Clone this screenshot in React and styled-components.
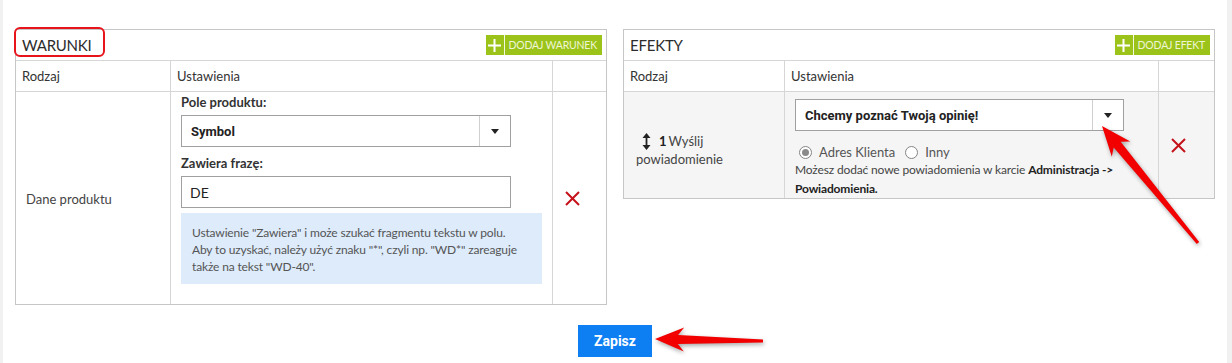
import React from 'react';
import styled, { createGlobalStyle } from 'styled-components';

const GlobalStyle = createGlobalStyle`
  html, body {
    margin: 0;
    padding: 0;
    background: #fff;
  }
  * {
    box-sizing: border-box;
  }
`;

const arrowPoints = (tip, tail, headLen, headHalf, neckHalf, tailHalf) => {
  const dx = tail[0] - tip[0];
  const dy = tail[1] - tip[1];
  const len = Math.hypot(dx, dy);
  const ux = dx / len;
  const uy = dy / len;
  const px = -uy;
  const py = ux;
  const base = [tip[0] + ux * headLen, tip[1] + uy * headLen];
  const neck = [tip[0] + ux * (headLen - 6), tip[1] + uy * (headLen - 6)];
  const pts = [
    tip,
    [base[0] + px * headHalf, base[1] + py * headHalf],
    [neck[0] + px * neckHalf, neck[1] + py * neckHalf],
    [tail[0] + px * tailHalf, tail[1] + py * tailHalf],
    [tail[0] - px * tailHalf, tail[1] - py * tailHalf],
    [neck[0] - px * neckHalf, neck[1] - py * neckHalf],
    [base[0] - px * headHalf, base[1] - py * headHalf],
  ];
  return pts.map((p) => p.map((v) => v.toFixed(1)).join(',')).join(' ');
};

const PlusIcon = () => (
  <svg width="13" height="13" viewBox="0 0 13 13">
    <rect x="5.5" y="0" width="2" height="13" fill="#fff" />
    <rect x="0" y="5.5" width="13" height="2" fill="#fff" />
  </svg>
);

const RemoveIcon = () => (
  <svg width="15" height="15" viewBox="0 0 15 15">
    <path d="M1 1 L14 14 M14 1 L1 14" stroke="#c5121b" strokeWidth="2" fill="none" />
  </svg>
);

const SortIcon = () => (
  <svg width="9" height="17" viewBox="0 0 9 17">
    <path d="M4.5 0 L8.5 5 L5.4 5 L5.4 12 L8.5 12 L4.5 17 L0.5 12 L3.6 12 L3.6 5 L0.5 5 Z" fill="#222" />
  </svg>
);

const AddButton = ({ children }) => (
  <Add>
    <AddIcon>
      <PlusIcon />
    </AddIcon>
    <AddLabel>{children}</AddLabel>
  </Add>
);

const SelectBox = ({ value, width }) => (
  <Select $width={width}>
    <SelectValue>{value}</SelectValue>
    <SelectCaret>
      <Caret />
    </SelectCaret>
  </Select>
);

const Radio = ({ checked, label }) => (
  <RadioLabel>
    <RadioCircle>{checked && <RadioDot />}</RadioCircle>
    {label}
  </RadioLabel>
);

const App = () => {
  return (
    <Page>
      <GlobalStyle />
      <Main>
        <Panels>
          <Panel>
            <PanelHeader>
              <PanelTitle>WARUNKI</PanelTitle>
              <AddButton>DODAJ WARUNEK</AddButton>
            </PanelHeader>
            <Row $cols="154px 382px 54px">
              <HeadCell>Rodzaj</HeadCell>
              <HeadCell>Ustawienia</HeadCell>
              <HeadCell />
            </Row>
            <Row $cols="154px 382px 54px">
              <TypeCell>Dane produktu</TypeCell>
              <SettingsCell>
                <FieldLabel>Pole produktu:</FieldLabel>
                <SelectBox value="Symbol" width={330} />
                <FieldLabel $gap>Zawiera frazę:</FieldLabel>
                <TextInput>DE</TextInput>
                <InfoBox>
                  Ustawienie "Zawiera" i może szukać fragmentu tekstu w polu.
                  <br />
                  Aby to uzyskać, należy użyć znaku "*", czyli np. "WD*" zareaguje
                  <br />
                  także na tekst "WD-40".
                </InfoBox>
              </SettingsCell>
              <ActionCell>
                <RemoveIcon />
              </ActionCell>
            </Row>
          </Panel>

          <Panel>
            <PanelHeader>
              <PanelTitle>EFEKTY</PanelTitle>
              <AddButton>DODAJ EFEKT</AddButton>
            </PanelHeader>
            <Row $cols="160px 374px 56px">
              <HeadCell>Rodzaj</HeadCell>
              <HeadCell>Ustawienia</HeadCell>
              <HeadCell />
            </Row>
            <Row $cols="160px 374px 56px" $shaded>
              <EffectCell>
                <EffectName>
                  <SortIcon />
                  <b>1</b>Wyślij
                </EffectName>
                powiadomienie
              </EffectCell>
              <EffectSettings>
                <SelectBox value="Chcemy poznać Twoją opinię!" width={329} />
                <RadioRow>
                  <Radio checked label="Adres Klienta" />
                  <Radio label="Inny" />
                </RadioRow>
                <Note>
                  Możesz dodać nowe powiadomienia w karcie <b>Administracja -&gt;</b>
                  <br />
                  <b>Powiadomienia.</b>
                </Note>
              </EffectSettings>
              <ActionCell>
                <RemoveIcon />
              </ActionCell>
            </Row>
          </Panel>
        </Panels>

        <Footer>
          <SaveButton>Zapisz</SaveButton>
        </Footer>
      </Main>

      <Highlight />
      <Annotations width="1232" height="363" viewBox="0 0 1232 363">
        <polygon points={arrowPoints([1102, 126], [1198, 243], 30, 12, 4.5, 1.5)} fill="#f20000" />
        <polygon points={arrowPoints([655, 339], [763, 341], 29, 12, 4.5, 1.5)} fill="#f20000" />
      </Annotations>
    </Page>
  );
};

const Page = styled.div`
  position: relative;
  width: 1232px;
  height: 363px;
  overflow: hidden;
  background: #fff;
  border-left: 3px solid #f1f1f1;
  border-right: 5px solid #f1f1f1;
  font-family: Lato, 'Open Sans', sans-serif;
  color: #444;
`;

const Main = styled.div`
  width: 1200px;
  margin-left: 12px;
  padding-top: 29px;
`;

const Panels = styled.div`
  display: flex;
  align-items: flex-start;
  gap: 16px;
`;

const Panel = styled.div`
  width: 592px;
  border: 1px solid #c6c6c6;
  background: #fff;
`;

const PanelHeader = styled.div`
  height: 30px;
  display: flex;
  align-items: center;
  justify-content: space-between;
  padding: 0 4px 0 6px;
`;

const PanelTitle = styled.div`
  font-size: 15px;
  color: #2c2c2c;
  letter-spacing: -0.2px;
`;

const Add = styled.div`
  display: flex;
  align-items: stretch;
  height: 20px;
  background: #9cc31a;
`;

const AddIcon = styled.div`
  width: 19px;
  display: flex;
  align-items: center;
  justify-content: center;
  border-right: 1px solid #f3f8e0;
`;

const AddLabel = styled.div`
  display: flex;
  align-items: center;
  padding: 0 5px 0 4px;
  font-size: 10.5px;
  color: #eef6d6;
  letter-spacing: -0.2px;
`;

const Row = styled.div`
  display: grid;
  grid-template-columns: ${(p) => p.$cols};
  border-top: 1px solid #d6d6d6;
  background: ${(p) => (p.$shaded ? '#f5f5f5' : '#fff')};

  & > * + * {
    border-left: 1px solid #d6d6d6;
  }
`;

const HeadCell = styled.div`
  height: 30px;
  display: flex;
  align-items: center;
  padding-left: 6px;
  font-size: 13px;
  color: #333;
`;

const TypeCell = styled.div`
  display: flex;
  align-items: center;
  padding: 2px 0 0 10px;
  font-size: 13px;
  color: #444;
`;

const SettingsCell = styled.div`
  display: flex;
  flex-direction: column;
  padding: 1px 10px 20px 10px;
`;

const FieldLabel = styled.div`
  height: 18px;
  line-height: 18px;
  font-size: 13px;
  font-weight: 700;
  color: #333;
  margin-top: ${(p) => (p.$gap ? '7px' : '0')};
  margin-bottom: 4px;
`;

const Select = styled.div`
  width: ${(p) => p.$width}px;
  height: 32px;
  display: flex;
  border: 1px solid #a0a0a0;
  background: #fff;
`;

const SelectValue = styled.div`
  flex: 1;
  display: flex;
  align-items: center;
  padding-left: 9px;
  font-family: Roboto, 'Liberation Sans', sans-serif;
  font-weight: 700;
  font-size: 13px;
  color: #222;
`;

const SelectCaret = styled.div`
  width: 31px;
  display: flex;
  align-items: center;
  justify-content: center;
  border-left: 1px solid #cfcfcf;
`;

const Caret = styled.span`
  width: 0;
  height: 0;
  border-left: 4px solid transparent;
  border-right: 4px solid transparent;
  border-top: 5px solid #222;
`;

const TextInput = styled.div`
  width: 330px;
  height: 32px;
  display: flex;
  align-items: center;
  padding-left: 8px;
  border: 1px solid #a0a0a0;
  background: #fff;
  font-family: Lato, sans-serif;
  font-size: 14px;
  color: #222;
`;

const InfoBox = styled.div`
  margin-top: 5px;
  height: 71px;
  padding: 11px 0 9px 11px;
  background: #ddebfb;
  font-size: 12px;
  line-height: 17px;
  letter-spacing: -0.15px;
  white-space: nowrap;
  color: #555;
`;

const ActionCell = styled.div`
  display: flex;
  align-items: center;
  padding-left: 12px;
`;

const EffectCell = styled.div`
  display: flex;
  flex-direction: column;
  justify-content: center;
  padding: 10px 0 0 12px;
  font-size: 13px;
  line-height: 18px;
  color: #444;
`;

const EffectName = styled.div`
  display: flex;
  align-items: center;
  gap: 2px;

  svg {
    margin: 0 6px 0 6px;
  }

  b {
    color: #222;
  }
`;

const EffectSettings = styled.div`
  display: flex;
  flex-direction: column;
  padding: 7px 0 0 10px;
`;

const RadioRow = styled.div`
  display: flex;
  align-items: center;
  gap: 10px;
  height: 16px;
  margin-top: 13px;
  padding-left: 4px;
`;

const RadioLabel = styled.div`
  display: flex;
  align-items: center;
  gap: 7px;
  font-size: 13px;
  color: #555;
`;

const RadioCircle = styled.span`
  width: 13px;
  height: 13px;
  border-radius: 50%;
  border: 1px solid #858585;
  background: #fff;
  display: flex;
  align-items: center;
  justify-content: center;
`;

const RadioDot = styled.span`
  width: 7px;
  height: 7px;
  border-radius: 50%;
  background: #8a8a8a;
`;

const Note = styled.div`
  font-size: 12px;
  line-height: 19px;
  letter-spacing: -0.15px;
  white-space: nowrap;
  color: #444;

  b {
    color: #222;
  }
`;

const Footer = styled.div`
  display: flex;
  justify-content: center;
  margin-top: 20px;
`;

const SaveButton = styled.button`
  width: 74px;
  height: 32px;
  border: none;
  background: #0e7ff3;
  color: #fff;
  font-family: Roboto, 'Liberation Sans', sans-serif;
  font-weight: 700;
  font-size: 14px;
  cursor: pointer;
`;

const Highlight = styled.div`
  position: absolute;
  left: 11px;
  top: 27px;
  width: 91px;
  height: 30px;
  border: 2px solid #e8141b;
  border-radius: 6px;
  pointer-events: none;
`;

const Annotations = styled.svg`
  position: absolute;
  left: -3px;
  top: 0;
  pointer-events: none;
  filter: drop-shadow(1px 2px 2px rgba(0, 0, 0, 0.35));
`;

export default App;
